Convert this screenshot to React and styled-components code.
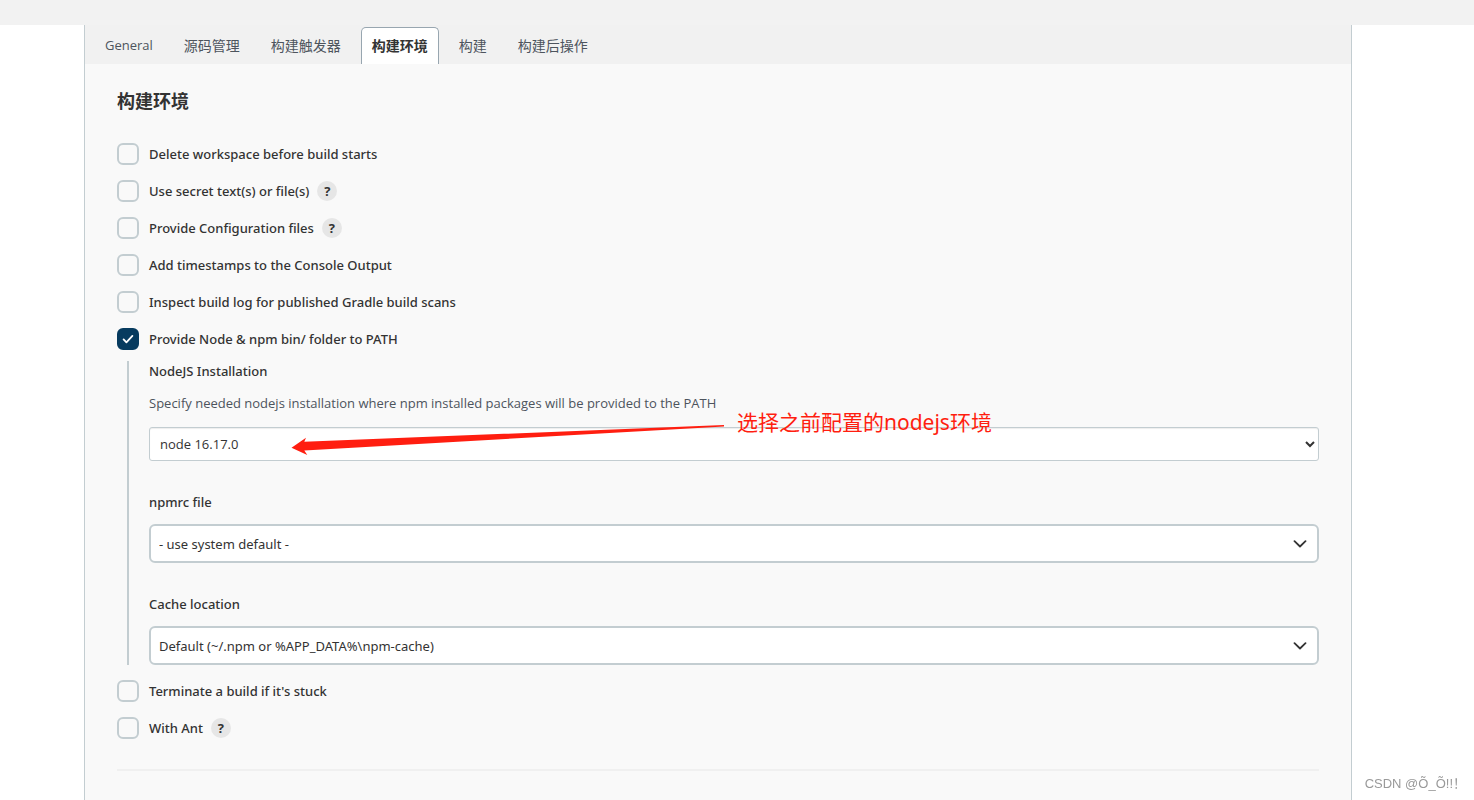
import { useState } from 'react';
import styled, { createGlobalStyle } from 'styled-components'

const tabs = ['General', '源码管理', '构建触发器', '构建环境', '构建', '构建后操作']

const optionsBefore = [
    { id: 'delete-workspace', label: 'Delete workspace before build starts' },
    { id: 'secret-text', label: 'Use secret text(s) or file(s)', help: true },
    { id: 'config-files', label: 'Provide Configuration files', help: true },
    { id: 'timestamps', label: 'Add timestamps to the Console Output' },
    { id: 'gradle-scans', label: 'Inspect build log for published Gradle build scans' },
    { id: 'node-path', label: 'Provide Node & npm bin/ folder to PATH' },
]

const optionsAfter = [
    { id: 'terminate', label: "Terminate a build if it's stuck" },
    { id: 'with-ant', label: 'With Ant', help: true },
]

const Option = ({ option, checked, onToggle }) => (
    <OptionRow>
        <CheckWrapper>
            <Checkbox id={option.id} checked={checked} onChange={() => onToggle(option.id)} />
            {checked && <CheckMark viewBox="0 0 22 22" aria-hidden="true">
                <path d="M6.6 11.4 L9.4 14.3 L15.4 7.9" />
            </CheckMark>}
        </CheckWrapper>
        <OptionLabel htmlFor={option.id}>{option.label}</OptionLabel>
        {option.help && <HelpButton type="button">?</HelpButton>}
    </OptionRow>
)

const SelectField = ({ id, label, value }) => (
    <Field>
        <FieldLabel htmlFor={id}>{label}</FieldLabel>
        <SelectWrapper>
            <Select id={id} defaultValue={value}>
                <option>{value}</option>
            </Select>
            <Chevron viewBox="0 0 14 8" aria-hidden="true">
                <path d="M1.5 1.2 L7 6.5 L12.5 1.2" />
            </Chevron>
        </SelectWrapper>
    </Field>
)

const App = () => {
    const [activeTab, setActiveTab] = useState('构建环境')
    const [checked, setChecked] = useState({ 'node-path': true })

    const toggle = (id) => {
        setChecked(checked => ({ ...checked, [id]: !checked[id] }))
    }

    return (
        <Page>
            <GlobalStyle />
            <TopBar />
            <Panel>
                <TabBar>
                    {tabs.map(tab => (
                        <Tab
                            key={tab}
                            type="button"
                            $active={tab === activeTab}
                            $latin={/^\w+$/.test(tab)}
                            onClick={() => setActiveTab(tab)}
                        >
                            {tab}
                        </Tab>
                    ))}
                </TabBar>

                <Content>
                    <Title>构建环境</Title>

                    <Options>
                        {optionsBefore.map(option => (
                            <Option key={option.id} option={option} checked={!!checked[option.id]} onToggle={toggle} />
                        ))}
                    </Options>

                    <Nested>
                        <Field>
                            <FieldLabel htmlFor="installation">NodeJS Installation</FieldLabel>
                            <Description>
                                Specify needed nodejs installation where npm installed packages will be provided to the PATH
                            </Description>
                            <PlainSelect id="installation" defaultValue="node 16.17.0">
                                <option>node 16.17.0</option>
                            </PlainSelect>
                            <Annotation>
                                <Arrow viewBox="0 0 434 30" aria-hidden="true">
                                    <path d="M0.5 22.8 L15 12.7 L13.3 16.8 L433 0 L433 1.4 L13.3 25.6 L16.3 30 Z" />
                                </Arrow>
                                <Note>选择之前配置的nodejs环境</Note>
                            </Annotation>
                        </Field>
                        <SelectField id="npmrc" label="npmrc file" value="- use system default -" />
                        <SelectField id="cache" label="Cache location" value="Default (~/.npm or %APP_DATA%\npm-cache)" />
                    </Nested>

                    <Options>
                        {optionsAfter.map(option => (
                            <Option key={option.id} option={option} checked={!!checked[option.id]} onToggle={toggle} />
                        ))}
                    </Options>

                    <Divider />
                </Content>
            </Panel>
            <Watermark>CSDN @Õ_Õ!!！</Watermark>
        </Page>
    )
}

export default App


const GlobalStyle = createGlobalStyle`
    * {
        box-sizing: border-box;
    }
    body {
        margin: 0;
        background-color: #fff;
        color: #333;
        font-family: "Open Sans", "Noto Sans CJK SC", sans-serif;
        font-size: 14px;
    }
    button, select {
        font-family: inherit;
        color: inherit;
    }
`

const Page = styled.div`
    display: flex;
    flex-direction: column;
    min-height: 100vh;
`

const TopBar = styled.header`
    height: 25px;
    background-color: #f2f2f2;
`

const Panel = styled.main`
    flex: 1;
    margin: 0 122px 0 84px;
    border: solid #c3cdd1;
    border-width: 0 1px;
    background-color: #f9f9f9;
`

const TabBar = styled.nav`
    display: flex;
    gap: 9px;
    padding: 2px 9px 0;
    background-color: #f1f1f1;
`

const Tab = styled.button`
    height: 37px;
    padding: 0 10px 2px;
    border: 1px solid ${props => props.$active ? '#98a6b0' : 'transparent'};
    border-bottom: 0;
    border-radius: 5px 5px 0 0;
    background-color: ${props => props.$active ? '#fff' : 'transparent'};
    color: ${props => props.$active ? '#333' : '#4d545d'};
    font-size: ${props => props.$latin ? '13px' : '14px'};
    font-weight: ${props => props.$active ? 700 : 400};
    cursor: pointer;
`

const Content = styled.div`
    padding: 24px 32px 0;
`

const Title = styled.h2`
    margin: 0 0 29px;
    font-size: 18px;
    line-height: 26px;
    font-weight: 700;
`

const Options = styled.div`
    display: flex;
    flex-direction: column;
    gap: 15px;
`

const OptionRow = styled.div`
    display: flex;
    align-items: center;
    height: 22px;
`

const CheckWrapper = styled.span`
    position: relative;
    width: 22px;
    height: 22px;
    margin-right: 10px;
`

const Checkbox = styled.input.attrs({ type: 'checkbox' })`
    appearance: none;
    display: block;
    width: 22px;
    height: 22px;
    margin: 0;
    border: 2px solid #c3cdd1;
    border-radius: 6px;
    &:checked {
        border-color: #073b5f;
        background-color: #073b5f;
    }
`

const CheckMark = styled.svg`
    position: absolute;
    inset: 0;
    pointer-events: none;
    fill: none;
    stroke: #fff;
    stroke-width: 1.8;
    stroke-linecap: round;
    stroke-linejoin: round;
`

const OptionLabel = styled.label`
    font-family: "Noto Sans", "Noto Sans CJK SC", sans-serif;
    font-size: 13px;
    line-height: 20px;
    font-weight: 500;
`

const HelpButton = styled.button`
    width: 20px;
    height: 20px;
    margin-left: 8px;
    padding: 0;
    border: 0;
    border-radius: 50%;
    background-color: #e6e6e6;
    font-size: 13px;
    line-height: 20px;
    font-weight: 700;
`

const Nested = styled.section`
    display: flex;
    flex-direction: column;
    gap: 31px;
    margin: 11px 0 15px 10px;
    padding-left: 20px;
    border-left: 2px solid #c3cdd1;
`

const Field = styled.div`
    position: relative;
    display: flex;
    flex-direction: column;
`

const FieldLabel = styled.label`
    font-family: "Noto Sans", "Noto Sans CJK SC", sans-serif;
    font-size: 13px;
    line-height: 20px;
    font-weight: 500;
`

const Description = styled.p`
    margin: 12px 0 14px;
    color: #4d545d;
    font-size: 13px;
    line-height: 20px;
`

const PlainSelect = styled.select`
    width: 100%;
    height: 34px;
    padding: 0 6px;
    border: 1px solid #c3cdd1;
    border-radius: 3px;
    background-color: #fff;
    box-shadow: inset 0 1px 1px rgba(0, 0, 0, 0.07);
    font-size: 13px;
`

const SelectWrapper = styled.div`
    position: relative;
    margin-top: 12px;
`

const Select = styled.select`
    appearance: none;
    display: block;
    width: 100%;
    height: 39px;
    padding: 0 32px 0 8px;
    border: 2px solid #c3cdd1;
    border-radius: 6px;
    background-color: #fff;
    font-family: "Noto Sans", "Noto Sans CJK SC", sans-serif;
    font-size: 13px;
`

const Chevron = styled.svg`
    position: absolute;
    top: 16px;
    right: 12px;
    width: 14px;
    height: 8px;
    pointer-events: none;
    fill: none;
    stroke: #333;
    stroke-width: 1.8;
    stroke-linecap: round;
    stroke-linejoin: round;
`

/* red pointer drawn over the select */
const Annotation = styled.div`
    position: absolute;
    left: 142px;
    bottom: 6px;
    display: flex;
    align-items: flex-end;
    gap: 12px;
    pointer-events: none;
`

const Arrow = styled.svg`
    width: 434px;
    height: 30px;
    fill: #ff1e10;
`

const Note = styled.span`
    padding-bottom: 18px;
    color: #ff1e10;
    font-family: "Noto Sans", "Noto Sans CJK SC", sans-serif;
    font-size: 21px;
    line-height: 30px;
    white-space: nowrap;
`

const Divider = styled.hr`
    height: 2px;
    margin: 30px 0 0;
    border: 0;
    background-color: #f0f0f0;
`

const Watermark = styled.div`
    position: fixed;
    right: 8px;
    bottom: 6px;
    color: #999;
    font-family: "Liberation Sans", "Noto Sans CJK SC", sans-serif;
    font-size: 13px;
    line-height: 20px;
`
